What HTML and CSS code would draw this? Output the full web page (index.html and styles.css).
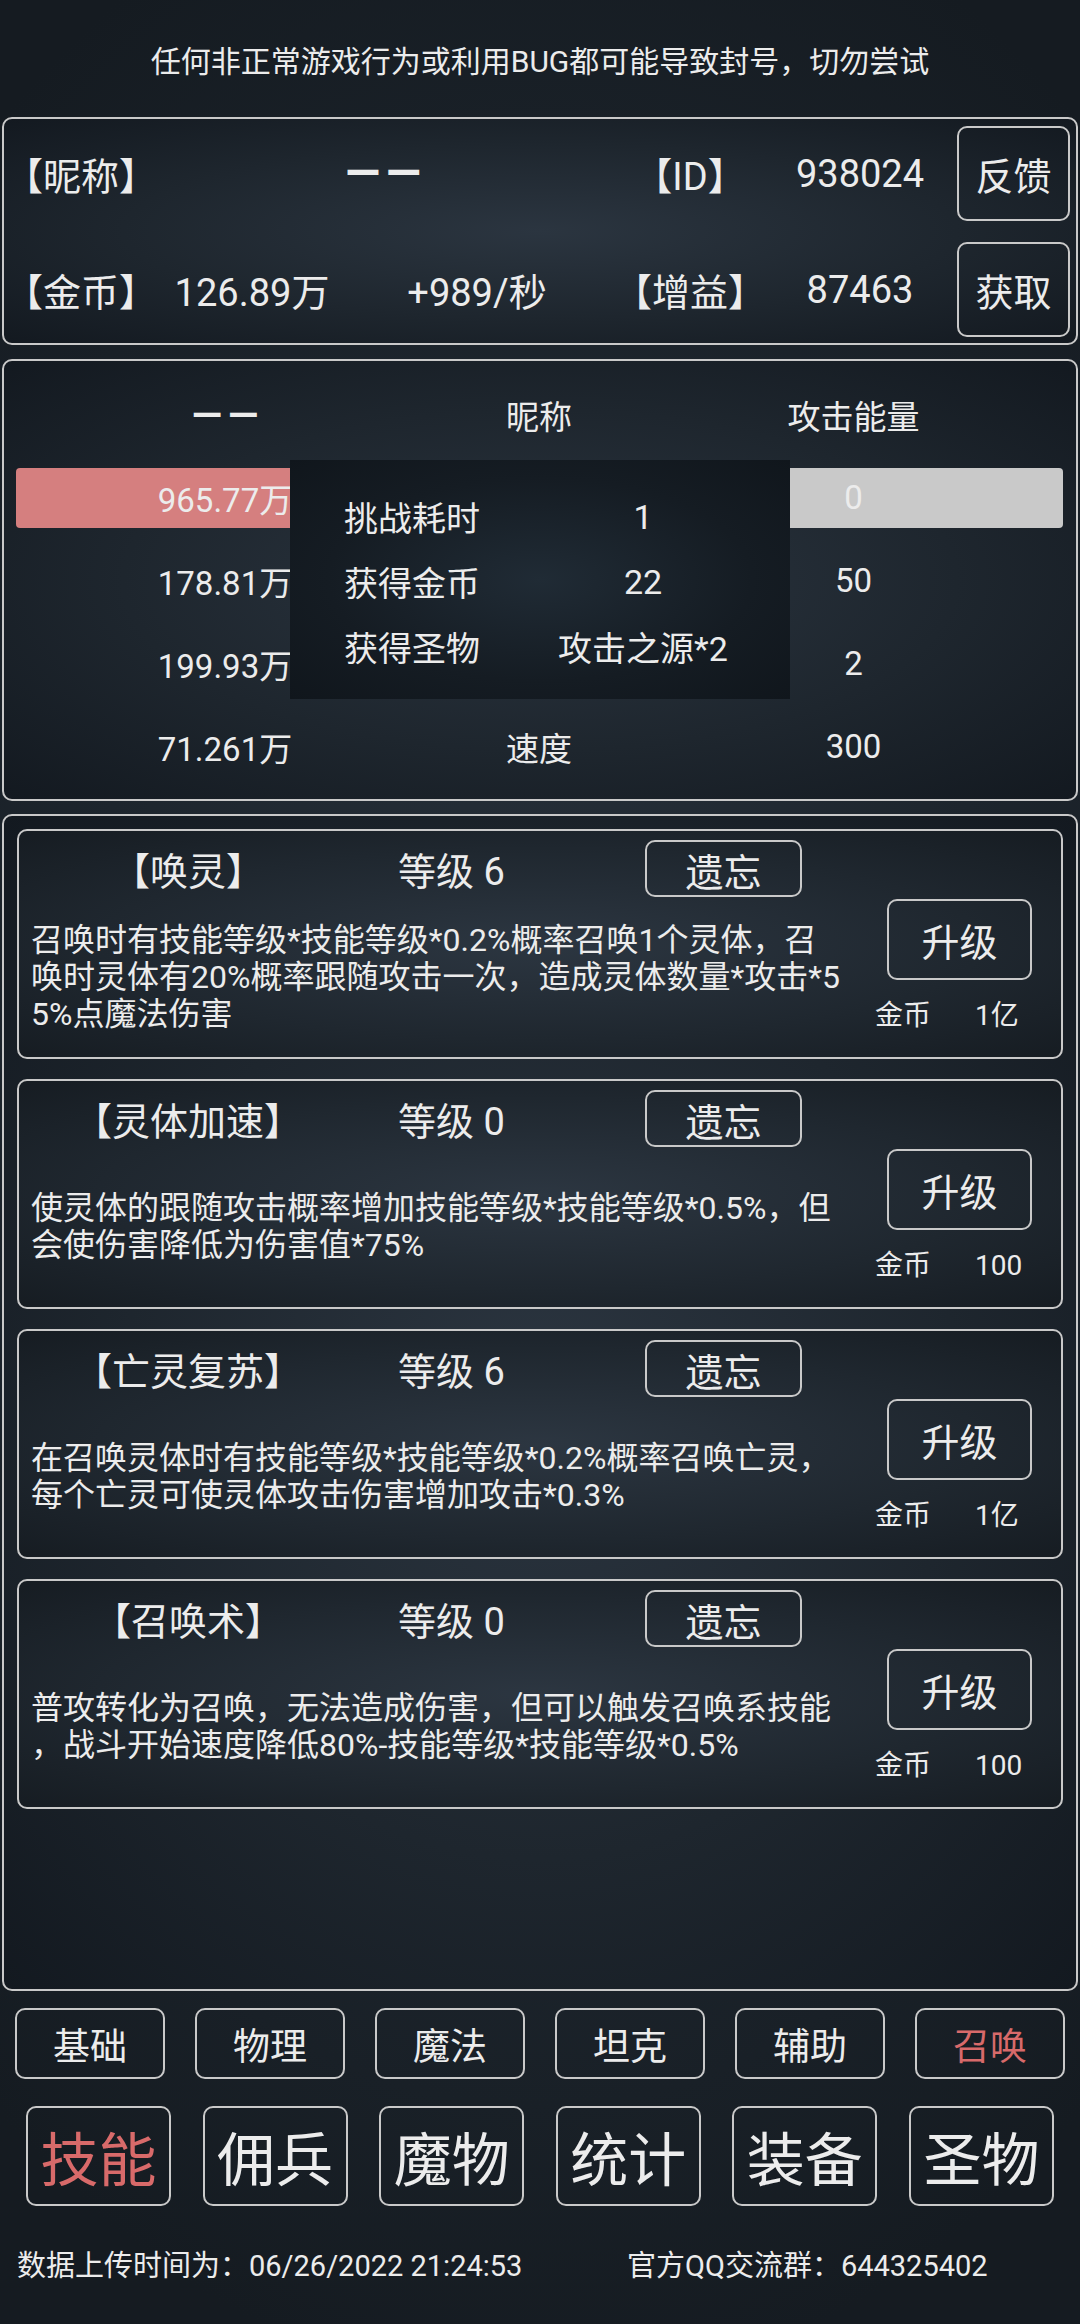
FILE: index.html
```html
<!DOCTYPE html>
<html lang="zh-CN">
<head>
    <meta charset="UTF-8">
    <meta name="viewport" content="width=device-width, initial-scale=1.0">
    <title>技能 - 召唤</title>
    <link rel="stylesheet" href="styles.css">
</head>
<body>

    <div class="notice">任何非正常游戏行为或利用BUG都可能导致封号，切勿尝试</div>

    <!-- 玩家信息 -->
    <div class="panel info">
        <div class="cell">【昵称】</div>
        <div class="cell span2 dash">——</div>
        <div class="cell">【ID】</div>
        <div class="cell">938024</div>
        <button class="box-btn info-btn">反馈</button>

        <div class="cell">【金币】</div>
        <div class="cell">126.89万</div>
        <div class="cell">+989/秒</div>
        <div class="cell">【增益】</div>
        <div class="cell">87463</div>
        <button class="box-btn info-btn">获取</button>
    </div>

    <!-- 战斗 -->
    <div class="panel battle">
        <div class="stat-grid">
            <div class="stat dash">——</div>
            <div class="stat">昵称</div>
            <div class="stat">攻击能量</div>

            <div class="stat"><div class="bar hp">965.77万</div></div>
            <div class="stat"></div>
            <div class="stat"><div class="bar energy">0</div></div>

            <div class="stat">178.81万</div>
            <div class="stat"></div>
            <div class="stat">50</div>

            <div class="stat">199.93万</div>
            <div class="stat"></div>
            <div class="stat">2</div>

            <div class="stat">71.261万</div>
            <div class="stat">速度</div>
            <div class="stat">300</div>
        </div>

        <div class="result">
            <div class="stat">挑战耗时</div><div class="stat">1</div>
            <div class="stat">获得金币</div><div class="stat">22</div>
            <div class="stat">获得圣物</div><div class="stat">攻击之源*2</div>
        </div>
    </div>

    <!-- 技能列表 -->
    <div class="panel skills">
        <div class="skill">
            <div class="skill-head">
                <div class="skill-name">【唤灵】</div>
                <div class="skill-level">等级 6</div>
                <button class="box-btn forget">遗忘</button>
            </div>
            <div class="skill-body">
                <div class="desc">召唤时有技能等级*技能等级*0.2%概率召唤1个灵体，召<br>唤时灵体有20%概率跟随攻击一次，造成灵体数量*攻击*5<br>5%点魔法伤害</div>
                <div class="upgrade-col">
                    <button class="box-btn upgrade">升级</button>
                    <div class="cost"><span class="cost-label">金币</span><span>1亿</span></div>
                </div>
            </div>
        </div>

        <div class="skill">
            <div class="skill-head">
                <div class="skill-name">【灵体加速】</div>
                <div class="skill-level">等级 0</div>
                <button class="box-btn forget">遗忘</button>
            </div>
            <div class="skill-body">
                <div class="desc">使灵体的跟随攻击概率增加技能等级*技能等级*0.5%，但<br>会使伤害降低为伤害值*75%</div>
                <div class="upgrade-col">
                    <button class="box-btn upgrade">升级</button>
                    <div class="cost"><span class="cost-label">金币</span><span>100</span></div>
                </div>
            </div>
        </div>

        <div class="skill">
            <div class="skill-head">
                <div class="skill-name">【亡灵复苏】</div>
                <div class="skill-level">等级 6</div>
                <button class="box-btn forget">遗忘</button>
            </div>
            <div class="skill-body">
                <div class="desc">在召唤灵体时有技能等级*技能等级*0.2%概率召唤亡灵，<br>每个亡灵可使灵体攻击伤害增加攻击*0.3%</div>
                <div class="upgrade-col">
                    <button class="box-btn upgrade">升级</button>
                    <div class="cost"><span class="cost-label">金币</span><span>1亿</span></div>
                </div>
            </div>
        </div>

        <div class="skill">
            <div class="skill-head">
                <div class="skill-name">【召唤术】</div>
                <div class="skill-level">等级 0</div>
                <button class="box-btn forget">遗忘</button>
            </div>
            <div class="skill-body">
                <div class="desc">普攻转化为召唤，无法造成伤害，但可以触发召唤系技能<br>，战斗开始速度降低80%-技能等级*技能等级*0.5%</div>
                <div class="upgrade-col">
                    <button class="box-btn upgrade">升级</button>
                    <div class="cost"><span class="cost-label">金币</span><span>100</span></div>
                </div>
            </div>
        </div>
    </div>

    <!-- 技能分类 -->
    <div class="tabs">
        <button class="box-btn tab">基础</button>
        <button class="box-btn tab">物理</button>
        <button class="box-btn tab">魔法</button>
        <button class="box-btn tab">坦克</button>
        <button class="box-btn tab">辅助</button>
        <button class="box-btn tab active">召唤</button>
    </div>

    <!-- 主菜单 -->
    <div class="tabs main-tabs">
        <button class="box-btn big-tab active">技能</button>
        <button class="box-btn big-tab">佣兵</button>
        <button class="box-btn big-tab">魔物</button>
        <button class="box-btn big-tab">统计</button>
        <button class="box-btn big-tab">装备</button>
        <button class="box-btn big-tab">圣物</button>
    </div>

    <div class="footer">
        <span class="upload">数据上传时间为：06/26/2022 21:24:53</span>
        <span>官方QQ交流群：644325402</span>
    </div>

</body>
</html>
```

FILE: styles.css
```css
body {
    margin: 0;
    width: 1080px;
    height: 2324px;
    overflow: hidden;
    color: #ececec;
    font-family: Roboto, "Noto Sans CJK SC", sans-serif;
    background: radial-gradient(ellipse 80% 55% at 50% 48%, #29323c 0%, #1d252d 55%, #151b21 100%);
}
.notice {
    height: 117px;
    display: flex;
    align-items: center;
    justify-content: center;
    font-size: 30px;
}
.panel {
    margin: 0 2px;
    box-sizing: border-box;
    border: 2px solid #c9c9c9;
    border-radius: 10px;
    background: radial-gradient(ellipse at 50% 50%, #2b3540 0%, #1e262e 55%, #131920 100%);
}
.dash {
    font-size: 1.2em;
    font-weight: bold;
    letter-spacing: 6px;
    padding-left: 6px;
}
.box-btn {
    box-sizing: border-box;
    padding: 0;
    border: 2px solid #c9c9c9;
    border-radius: 10px;
    background: transparent;
    color: #ececec;
    font-family: inherit;
    cursor: pointer;
}

/* 玩家信息 */
.info {
    display: grid;
    grid-template-columns: 154px 188px 262px 164px 176px 122px;
    grid-template-rows: 95px 95px;
    row-gap: 21px;
    height: 228px;
    padding: 7px 0 6px;
    font-size: 38px;
}
.cell {
    display: flex;
    align-items: center;
    justify-content: center;
    white-space: nowrap;
}
.span2 {
    grid-column: span 2;
}
.info-btn {
    justify-self: end;
    width: 113px;
    height: 95px;
    font-size: 38px;
}

/* 战斗 */
.battle {
    position: relative;
    margin-top: 14px;
    height: 442px;
    padding: 12px 13px 11px 12px;
}
.stat-grid {
    display: grid;
    grid-template-columns: 418px 210px 419px;
    grid-auto-rows: 83px;
    font-size: 33px;
}
.stat {
    display: flex;
    align-items: center;
    justify-content: center;
    white-space: nowrap;
}
.bar {
    width: 100%;
    height: 60px;
    display: flex;
    align-items: center;
    justify-content: center;
    border-radius: 4px;
}
.hp {
    background: #d57f7f;
}
.energy {
    background: #c9c9c9;
}
.result {
    position: absolute;
    left: 286px;
    top: 99px;
    width: 500px;
    height: 239px;
    box-sizing: border-box;
    padding-top: 24px;
    display: grid;
    grid-template-columns: 244px 218px;
    grid-auto-rows: 65px;
    font-size: 34px;
    background: radial-gradient(ellipse at 50% 50%, #202b35 0%, #151c23 60%, #10161c 100%);
}

/* 技能列表 */
.skills {
    margin-top: 13px;
    height: 1177px;
    padding: 13px 13px 0;
    display: flex;
    flex-direction: column;
    gap: 20px;
}
.skill {
    height: 230px;
    flex-shrink: 0;
    box-sizing: border-box;
    border: 2px solid #c9c9c9;
    border-radius: 10px;
    display: flex;
    flex-direction: column;
    background: radial-gradient(ellipse at 50% 50%, #2c3641 0%, #1f272f 60%, #161c22 100%);
}
.skill-head {
    display: flex;
    align-items: center;
    height: 57px;
    margin-top: 9px;
    font-size: 38px;
}
.skill-name {
    width: 338px;
    text-align: center;
    white-space: nowrap;
}
.skill-level {
    width: 288px;
    box-sizing: border-box;
    padding-left: 41px;
}
.forget {
    width: 157px;
    height: 57px;
    font-size: 38px;
}
.skill-body {
    flex: 1;
    display: flex;
    padding-left: 12px;
}
.desc {
    width: 844px;
    align-self: center;
    font-size: 32px;
    line-height: 37px;
    white-space: nowrap;
}
.upgrade-col {
    display: flex;
    flex-direction: column;
    padding-top: 2px;
}
.upgrade {
    margin-left: 12px;
    width: 145px;
    height: 81px;
    font-size: 38px;
}
.cost {
    display: flex;
    margin-top: 20px;
    font-size: 28px;
    line-height: 32px;
}
.cost-label {
    width: 100px;
}

/* 底部按钮 */
.tabs {
    display: flex;
    gap: 30px;
    margin-top: 17px;
    padding-left: 15px;
}
.tab {
    width: 150px;
    height: 71px;
    font-size: 37px;
}
.main-tabs {
    gap: 31.6px;
    margin-top: 27px;
    padding-left: 26px;
}
.big-tab {
    width: 145px;
    height: 100px;
    font-size: 58px;
}
.active {
    color: #d86a6a;
}
.footer {
    display: flex;
    margin-top: 40px;
    padding-left: 17px;
    font-size: 29px;
    line-height: 40px;
    white-space: nowrap;
}
.upload {
    width: 610px;
}
```
